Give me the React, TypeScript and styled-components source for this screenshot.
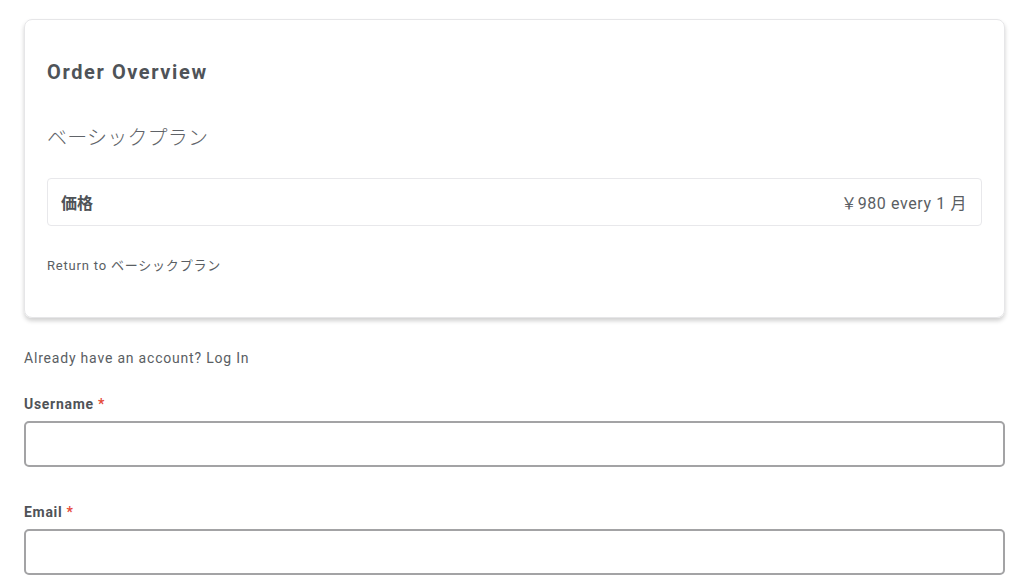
import React from "react";
import styled, { createGlobalStyle } from "styled-components";

const GlobalStyle = createGlobalStyle`
	body {
		margin: 0;
		background: #ffffff;
		font-family: Roboto, "Noto Sans CJK JP", sans-serif;
		color: #505459;
	}
`;

const Page = styled.div`
	width: 981px;
	padding: 19px 0 0 24px;
`;

const Card = styled.section`
	border: 1px solid #e6e6e8;
	border-radius: 8px;
	box-shadow: 0 3px 4px rgba(0, 0, 0, 0.18);
	padding: 40px 22px 43px 22px;
`;

const Title = styled.h2`
	margin: 0;
	font-size: 20px;
	font-weight: 700;
	letter-spacing: 1.6px;
	line-height: 24px;
	color: #4f5358;
`;

const PlanName = styled.div`
	margin-top: 42px;
	font-size: 20px;
	line-height: 24px;
	font-weight: 300;
	letter-spacing: 0.2px;
	color: #606368;
`;

const PriceRow = styled.div`
	margin-top: 28px;
	height: 46px;
	display: flex;
	align-items: center;
	justify-content: space-between;
	padding: 0 14px 0 13px;
	border: 1px solid #e8e8eb;
	border-radius: 4px;
`;

const PriceLabel = styled.span`
	font-size: 16px;
	font-weight: 700;
	color: #4f5358;
`;

const PriceValue = styled.span`
	font-size: 16px;
	color: #5a5e63;
	letter-spacing: 0.6px;
`;

const ReturnLink = styled.a`
	display: block;
	margin-top: 32px;
	font-size: 13px;
	line-height: 16px;
	letter-spacing: 0.8px;
	color: #5a5e63;
	text-decoration: none;
`;

const LoginNote = styled.p`
	margin: 31px 0 0;
	font-size: 14px;
	line-height: 18px;
	color: #5a5e63;
	letter-spacing: 0.8px;
`;

const Field = styled.div`
	margin-top: ${({ $gap }: { $gap: number }) => $gap}px;
	display: flex;
	flex-direction: column;
	gap: 8px;
`;

const Label = styled.label`
	font-size: 14px;
	font-weight: 700;
	line-height: 18px;
	letter-spacing: 0.7px;
	color: #4f5358;
`;

const Required = styled.span`
	color: #e5493a;
`;

const Input = styled.input`
	box-sizing: border-box;
	width: 100%;
	height: 46px;
	border: 2px solid #a3a3a5;
	border-radius: 5px;
	background: #fff;
	outline: none;
`;

export default function App() {
	return (
		<>
			<GlobalStyle />
			<Page>
				<Card>
					<Title>Order Overview</Title>
					<PlanName>ベーシックプラン</PlanName>
					<PriceRow>
						<PriceLabel>価格</PriceLabel>
						<PriceValue>￥980 every 1 月</PriceValue>
					</PriceRow>
					<ReturnLink href="#">Return to ベーシックプラン</ReturnLink>
				</Card>
				<LoginNote>Already have an account? Log In</LoginNote>
				<Field $gap={28}>
					<Label>
						Username <Required>*</Required>
					</Label>
					<Input type="text" />
				</Field>
				<Field $gap={36}>
					<Label>
						Email <Required>*</Required>
					</Label>
					<Input type="email" />
				</Field>
			</Page>
		</>
	);
}
